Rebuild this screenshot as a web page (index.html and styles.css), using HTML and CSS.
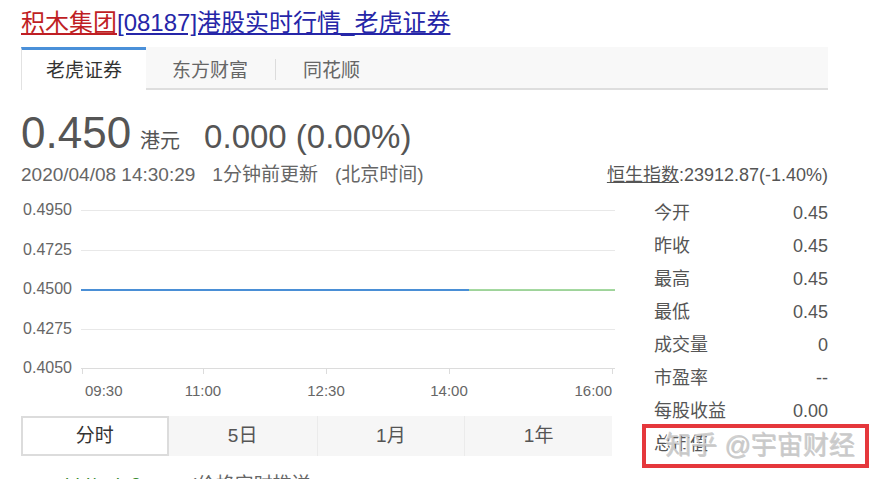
FILE: index.html
```html
<!DOCTYPE html>
<html lang="zh-CN">
<head>
<meta charset="utf-8">
<title>积木集团[08187]港股实时行情_老虎证券</title>
<link rel="stylesheet" href="styles.css">
</head>
<body>
<div class="page">
  <h1 class="title"><a class="name" href="#">积木集团</a><a class="sub" href="#">[08187]港股实时行情_老虎证券</a></h1>

  <div class="tabs">
    <div class="tab active">老虎证券</div>
    <div class="tab">东方财富</div>
    <div class="sep"></div>
    <div class="tab">同花顺</div>
  </div>

  <div class="price-row">
    <span class="price">0.450</span>
    <span class="unit">港元</span>
    <span class="change">0.000 (0.00%)</span>
  </div>

  <div class="meta-row">
    <div class="time">2020/04/08 14:30:29<span class="gap"></span>1分钟前更新<span class="gap"></span>(北京时间)</div>
    <div class="hsi"><a href="#">恒生指数</a>:23912.87(-1.40%)</div>
  </div>

  <div class="main">
    <div class="chart-col">
      <svg class="chart" width="596" height="204" viewBox="0 0 596 204">
        <g class="grid">
          <line x1="60" y1="13.5" x2="594" y2="13.5"/>
          <line x1="60" y1="53.5" x2="594" y2="53.5"/>
          <line x1="60" y1="93.5" x2="594" y2="93.5"/>
          <line x1="60" y1="132.5" x2="594" y2="132.5"/>
        </g>
        <g class="axis">
          <line x1="60" y1="171.5" x2="594" y2="171.5"/>
          <line x1="61.5" y1="171" x2="61.5" y2="177"/>
          <line x1="182.5" y1="171" x2="182.5" y2="177"/>
          <line x1="305.5" y1="171" x2="305.5" y2="177"/>
          <line x1="428.5" y1="171" x2="428.5" y2="177"/>
          <line x1="591.5" y1="171" x2="591.5" y2="177"/>
        </g>
        <line class="line-blue" x1="60" y1="93" x2="448" y2="93"/>
        <line class="line-green" x1="448" y1="93" x2="594" y2="93"/>
        <g class="ylab">
          <text x="51" y="18">0.4950</text>
          <text x="51" y="58">0.4725</text>
          <text x="51" y="97">0.4500</text>
          <text x="51" y="137">0.4275</text>
          <text x="51" y="176">0.4050</text>
        </g>
        <g class="xlab">
          <text x="64" y="199">09:30</text>
          <text x="182" y="199" text-anchor="middle">11:00</text>
          <text x="305" y="199" text-anchor="middle">12:30</text>
          <text x="428" y="199" text-anchor="middle">14:00</text>
          <text x="591" y="199" text-anchor="end">16:00</text>
        </g>
      </svg>
      <div class="periods">
        <div class="period active">分时</div>
        <div class="period">5日</div>
        <div class="period">1月</div>
        <div class="period">1年</div>
      </div>
    </div>

    <div class="stats">
      <div class="stat"><span>今开</span><span>0.45</span></div>
      <div class="stat"><span>昨收</span><span>0.45</span></div>
      <div class="stat"><span>最高</span><span>0.45</span></div>
      <div class="stat"><span>最低</span><span>0.45</span></div>
      <div class="stat"><span>成交量</span><span>0</span></div>
      <div class="stat"><span>市盈率</span><span>--</span></div>
      <div class="stat"><span>每股收益</span><span>0.00</span></div>
      <div class="stat"><span>总市值</span><span></span></div>
    </div>
  </div>

  <div class="foot">
    <span class="foot-green">bid/ask 2</span>
    <span class="foot-grey">(价格实时推送</span>
  </div>
</div>

<div class="annot">
  <span class="watermark">知乎 @宇宙财经</span>
</div>
</body>
</html>
```

FILE: styles.css
```css
html, body {
  margin: 0;
  padding: 0;
  overflow: hidden;
  background: #fff;
}

body {
  font-family: "Liberation Sans", "Noto Sans CJK SC", sans-serif;
  color: #555;
  width: 872px;
  height: 479px;
  position: relative;
}

.page {
  padding: 8px 0 0 21px;
  width: 807px;
}

.title {
  margin: 0;
  font-size: 24px;
  font-weight: normal;
  line-height: 30px;
  white-space: nowrap;
}

.title a {
  text-decoration: underline;
  text-underline-offset: 2px;
}

.title .name {
  color: #bf1e24;
}

.title .sub {
  color: #2626a8;
}

/* source tabs */
.tabs {
  margin-top: 9px;
  height: 41px;
  display: flex;
  align-items: flex-start;
  background: #f8f8f8;
  border-bottom: 2px solid #dedede;
}

.tab {
  box-sizing: border-box;
  height: 41px;
  padding: 4px 26px 0;
  border-top: 3px solid transparent;
  font-size: 19px;
  line-height: 34px;
  color: #666;
}

.tab.active {
  padding: 4px 24px 0;
  background: #fff;
  color: #333;
  border-top-color: #4a90d9;
  border-left: 1px solid #e2e2e2;
  height: 43px;
}

.sep {
  align-self: stretch;
  width: 1px;
  background: #dcdcdc;
  margin: 12px 1px 8px;
}

/* price */
.price-row {
  margin-top: 21px;
  display: flex;
  align-items: baseline;
  white-space: nowrap;
  line-height: 44px;
}

.price {
  font-size: 44px;
  color: #555;
}

.unit {
  font-size: 20px;
  margin-left: 9px;
  color: #555;
}

.change {
  font-size: 33px;
  margin-left: 24px;
  color: #555;
}

/* meta */
.meta-row {
  margin-top: 0;
  display: flex;
  justify-content: space-between;
  align-items: baseline;
  line-height: 24px;
  white-space: nowrap;
}

.time {
  font-size: 19px;
  color: #666;
}

.gap {
  display: inline-block;
  width: 17px;
}

.hsi {
  font-size: 18px;
  color: #555;
}

.hsi a {
  color: #555;
  text-decoration: underline;
}

/* main */
.main {
  margin-top: 10px;
  display: flex;
  align-items: flex-start;
}

.chart-col {
  width: 591px;
  flex: none;
}

.chart {
  display: block;
  overflow: visible;
}

.grid line {
  stroke: #e8e8e8;
  stroke-width: 1;
}

.axis line {
  stroke: #dcdcdc;
  stroke-width: 1;
}

.line-blue {
  stroke: #4a8fd6;
  stroke-width: 2;
}

.line-green {
  stroke: #86cc80;
  stroke-width: 1.6;
}

.ylab text {
  font-family: "Liberation Sans", sans-serif;
  font-size: 16px;
  fill: #666;
  text-anchor: end;
}

.xlab text {
  font-family: "Liberation Sans", sans-serif;
  font-size: 15px;
  fill: #666;
}

.periods {
  margin-top: 15px;
  display: grid;
  grid-template-columns: repeat(4, 1fr);
  height: 40px;
  background: #f6f6f6;
}

.period {
  box-sizing: border-box;
  text-align: center;
  font-size: 19px;
  line-height: 40px;
  color: #555;
  border-left: 1px solid #ebebeb;
}

.period.active {
  background: #fff;
  border: 2px solid #dcdcdc;
  line-height: 36px;
  color: #333;
}

.period.active + .period {
  border-left: none;
}

/* stats */
.stats {
  margin-left: 42px;
  width: 174px;
  flex: none;
}

.stat {
  display: flex;
  justify-content: space-between;
  font-size: 18px;
  line-height: 33px;
  height: 33px;
  color: #555;
  white-space: nowrap;
}

/* bottom row */
.foot {
  margin-top: 12px;
  font-size: 19px;
  line-height: 24px;
  white-space: nowrap;
}

.foot-green {
  margin-left: 44px;
  color: #3a8a2e;
}

.foot-grey {
  margin-left: 44px;
  color: #666;
}

/* red annotation box with watermark */
.annot {
  position: absolute;
  left: 642px;
  top: 424px;
  width: 227px;
  height: 44px;
  box-sizing: border-box;
  border: 4px solid #e5373c;
}

.watermark {
  position: absolute;
  left: 19px;
  top: 2px;
  font-size: 26px;
  line-height: 30px;
  white-space: nowrap;
  color: rgba(200, 200, 200, 0.85);
  text-shadow: 1px 1px 0 rgba(110, 110, 110, 0.35), -1px -1px 0 #fff;
}
```
